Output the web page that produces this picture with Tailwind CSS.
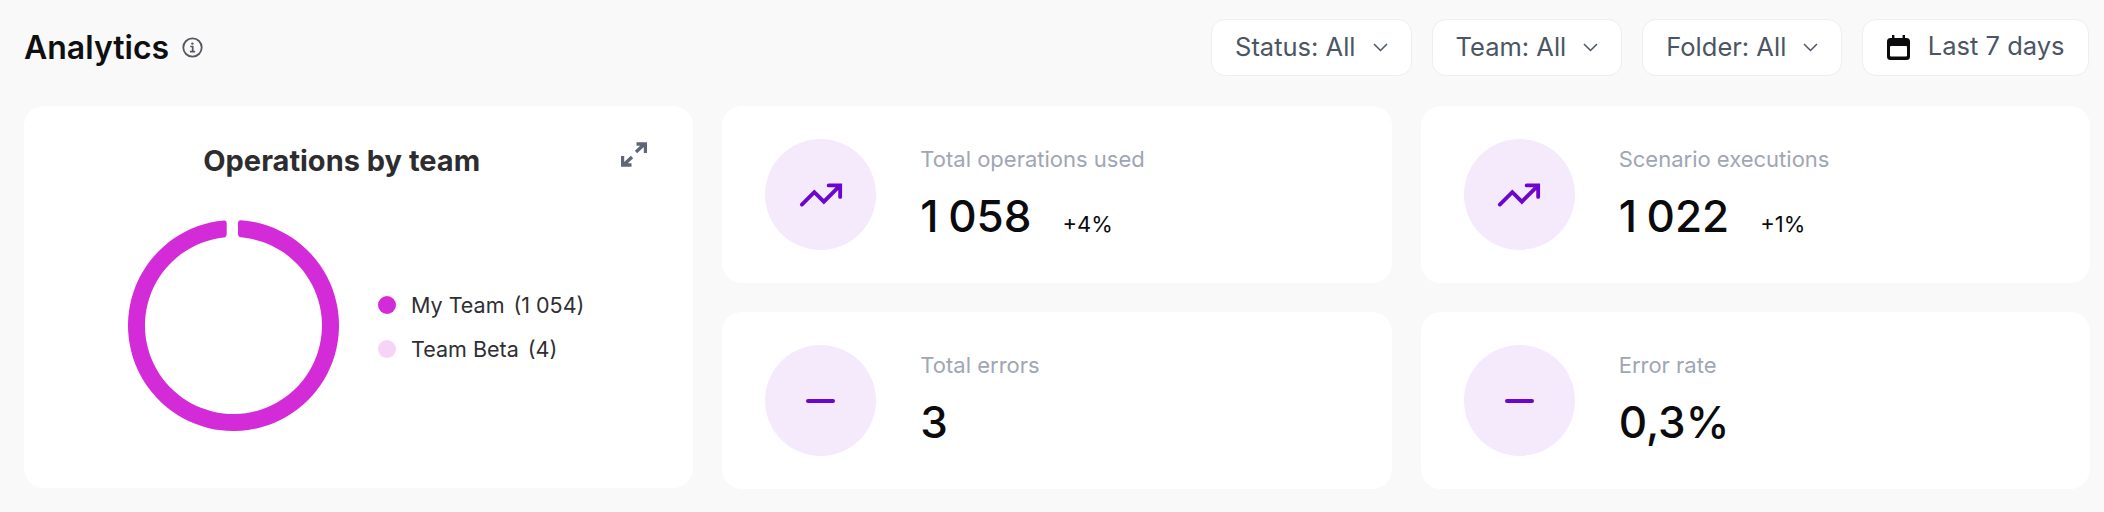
<!DOCTYPE html>
<html lang="en">
  <head>
    <meta charset="UTF-8" />
    <title>Analytics</title>
    <script src="https://cdn.jsdelivr.net/npm/@tailwindcss/browser@4"></script>
  </head>
  <body class="bg-[#f9f9f9] h-[512px] overflow-hidden font-['Inter',sans-serif]">
    <div class="pt-[19px] pl-[24px] pr-[14px]">
      <!-- Header -->
      <div class="flex items-center justify-between h-[57px]">
        <div class="flex items-center gap-[13px]">
          <h1 class="text-[32px] leading-[40px] font-semibold text-[#0f0f12]">Analytics</h1>
          <svg class="w-[21px] h-[21px] text-[#55585f]" viewBox="0 0 21 21" fill="none" stroke="currentColor">
            <circle cx="10.5" cy="10.5" r="9.2" stroke-width="1.8" />
            <path d="M8.3 9.5h2.4v5M7.9 14.6h5.2" stroke-width="1.7" />
            <circle cx="10.4" cy="6.6" r="1.2" fill="currentColor" stroke="none" />
          </svg>
        </div>
        <div class="flex items-center gap-[20px] mr-[1px] text-[25.500px] text-[#4b5563]">
          <button class="flex items-center gap-[17px] h-[57px] px-[23px] bg-white border border-[#eceef1] rounded-[14px]">
            Status: All
            <svg class="w-[15px] h-[9px]" viewBox="0 0 15 9" fill="none" stroke="currentColor" stroke-width="1.5"><path d="M1 1l6.5 6.5L14 1" /></svg>
          </button>
          <button class="flex items-center gap-[17px] h-[57px] px-[23px] bg-white border border-[#eceef1] rounded-[14px]">
            Team: All
            <svg class="w-[15px] h-[9px]" viewBox="0 0 15 9" fill="none" stroke="currentColor" stroke-width="1.5"><path d="M1 1l6.5 6.5L14 1" /></svg>
          </button>
          <button class="flex items-center gap-[17px] h-[57px] px-[23px] bg-white border border-[#eceef1] rounded-[14px]">
            Folder: All
            <svg class="w-[15px] h-[9px]" viewBox="0 0 15 9" fill="none" stroke="currentColor" stroke-width="1.5"><path d="M1 1l6.5 6.5L14 1" /></svg>
          </button>
          <button class="flex items-center gap-[18px] h-[57px] px-[23.500px] bg-white border border-[#eceef1] rounded-[14px]">
            <svg class="w-[23px] h-[25px]" viewBox="0 0 23 25">
              <path fill="#0b0b0d" d="M5 0h2.4v3H15.6V0H18v3h1.5A3.5 3.5 0 0 1 23 6.5V21.5A3.5 3.5 0 0 1 19.500 25h-16A3.500 3.500 0 0 1 0 21.500V6.500A3.500 3.500 0 0 1 3.500 3H5z" />
              <rect x="3" y="11" width="17" height="10.500" rx="1" fill="#fff" />
            </svg>
            <span class="-mt-[2px]">Last 7 days</span>
          </button>
        </div>
      </div>

      <!-- Cards -->
      <div class="grid grid-cols-3 gap-x-[29px] gap-y-[29px] mt-[30px]">
        <div class="row-span-2 relative bg-white rounded-[20px] h-[382px] pt-[37px]">
          <h2 class="text-center text-[29px] leading-[35px] font-bold text-[#2d2d30] pr-[34px]">Operations by team</h2>
          <svg class="absolute top-[36px] right-[46px] w-[26px] h-[25px] text-[#5f6675]" viewBox="0 0 26 25" fill="none" stroke="currentColor">
            <path d="M15 10l8-7.500M15.500 2h9v9M11 15l-8 7.500M10.500 23h-9v-9" stroke-width="3.400" />
          </svg>
          <div class="flex items-center mt-[42px] pl-[104px]">
            <svg class="w-[211px] h-[211px] shrink-0" viewBox="0 0 211 211">
              <path fill="#d42bd9" d="M113 .27A105.500 105.500 0 1 1 95.700 .46Q98.700 .22 98.700 3.200L98.700 14.300Q98.700 17.260 95.700 17.540A88.500 88.500 0 1 0 113 17.320Q110 17.110 110 14.100L110 3.100Q110 .1 113 .27Z" />
            </svg>
            <div class="ml-[39px] mt-[2px] flex flex-col gap-[18px] text-[21.500px] leading-[26px] text-[#2f2f33]">
              <div class="flex items-center gap-[15px]">
                <span class="w-[18px] h-[18px] rounded-full bg-[#d42bd9]"></span>
                <span>My Team<span class="ml-[9px]">(1<span class="ml-[2px]">&#8201;054)</span></span></span>
              </div>
              <div class="flex items-center gap-[15px]">
                <span class="w-[18px] h-[18px] rounded-full bg-[#f6d4f7]"></span>
                <span>Team Beta<span class="ml-[9px]">(4)</span></span>
              </div>
            </div>
          </div>
        </div>

        <div class="flex items-center gap-[44px] bg-white rounded-[20px] h-[177px] pl-[43px]">
          <div class="flex items-center justify-center w-[111px] h-[111px] rounded-full bg-[#f5eafc]">
            <svg class="w-[46px] h-[46px] text-[#6c06cf]" viewBox="0 0 24 24" fill="none" stroke="currentColor" stroke-width="2" stroke-linecap="round"><path d="M22 7l-8.500 8.500-5-5L2 17M16 7h6v6" /></svg>
          </div>
          <div>
            <p class="text-[22px] leading-[28px] text-[#a0a6b3]">Total operations used</p>
            <div class="flex items-baseline gap-[31px] mt-[15px]">
              <span class="text-[44px] leading-[56px] font-[550] text-[#0b0b0d]">1<span class="ml-[2px]">&#8201;058</span></span>
              <span class="text-[22px] text-[#0b0b0d]">+4%</span>
            </div>
          </div>
        </div>

        <div class="flex items-center gap-[44px] bg-white rounded-[20px] h-[177px] pl-[43px]">
          <div class="flex items-center justify-center w-[111px] h-[111px] rounded-full bg-[#f5eafc]">
            <svg class="w-[46px] h-[46px] text-[#6c06cf]" viewBox="0 0 24 24" fill="none" stroke="currentColor" stroke-width="2" stroke-linecap="round"><path d="M22 7l-8.500 8.500-5-5L2 17M16 7h6v6" /></svg>
          </div>
          <div>
            <p class="text-[22px] leading-[28px] text-[#a0a6b3]">Scenario executions</p>
            <div class="flex items-baseline gap-[31px] mt-[15px]">
              <span class="text-[44px] leading-[56px] font-[550] text-[#0b0b0d]">1<span class="ml-[2px]">&#8201;022</span></span>
              <span class="text-[22px] text-[#0b0b0d]">+1%</span>
            </div>
          </div>
        </div>

        <div class="flex items-center gap-[44px] bg-white rounded-[20px] h-[177px] pl-[43px]">
          <div class="flex items-center justify-center w-[111px] h-[111px] rounded-full bg-[#f5eafc]">
            <span class="block w-[29px] h-[4px] rounded-full bg-[#6c06cf]"></span>
          </div>
          <div>
            <p class="text-[22px] leading-[28px] text-[#a0a6b3]">Total errors</p>
            <div class="mt-[15px]">
              <span class="text-[44px] leading-[56px] font-[550] text-[#0b0b0d]">3</span>
            </div>
          </div>
        </div>

        <div class="flex items-center gap-[44px] bg-white rounded-[20px] h-[177px] pl-[43px]">
          <div class="flex items-center justify-center w-[111px] h-[111px] rounded-full bg-[#f5eafc]">
            <span class="block w-[29px] h-[4px] rounded-full bg-[#6c06cf]"></span>
          </div>
          <div>
            <p class="text-[22px] leading-[28px] text-[#a0a6b3]">Error rate</p>
            <div class="mt-[15px]">
              <span class="text-[44px] leading-[56px] font-[550] text-[#0b0b0d]">0,3%</span>
            </div>
          </div>
        </div>
      </div>
    </div>
  </body>
</html>
